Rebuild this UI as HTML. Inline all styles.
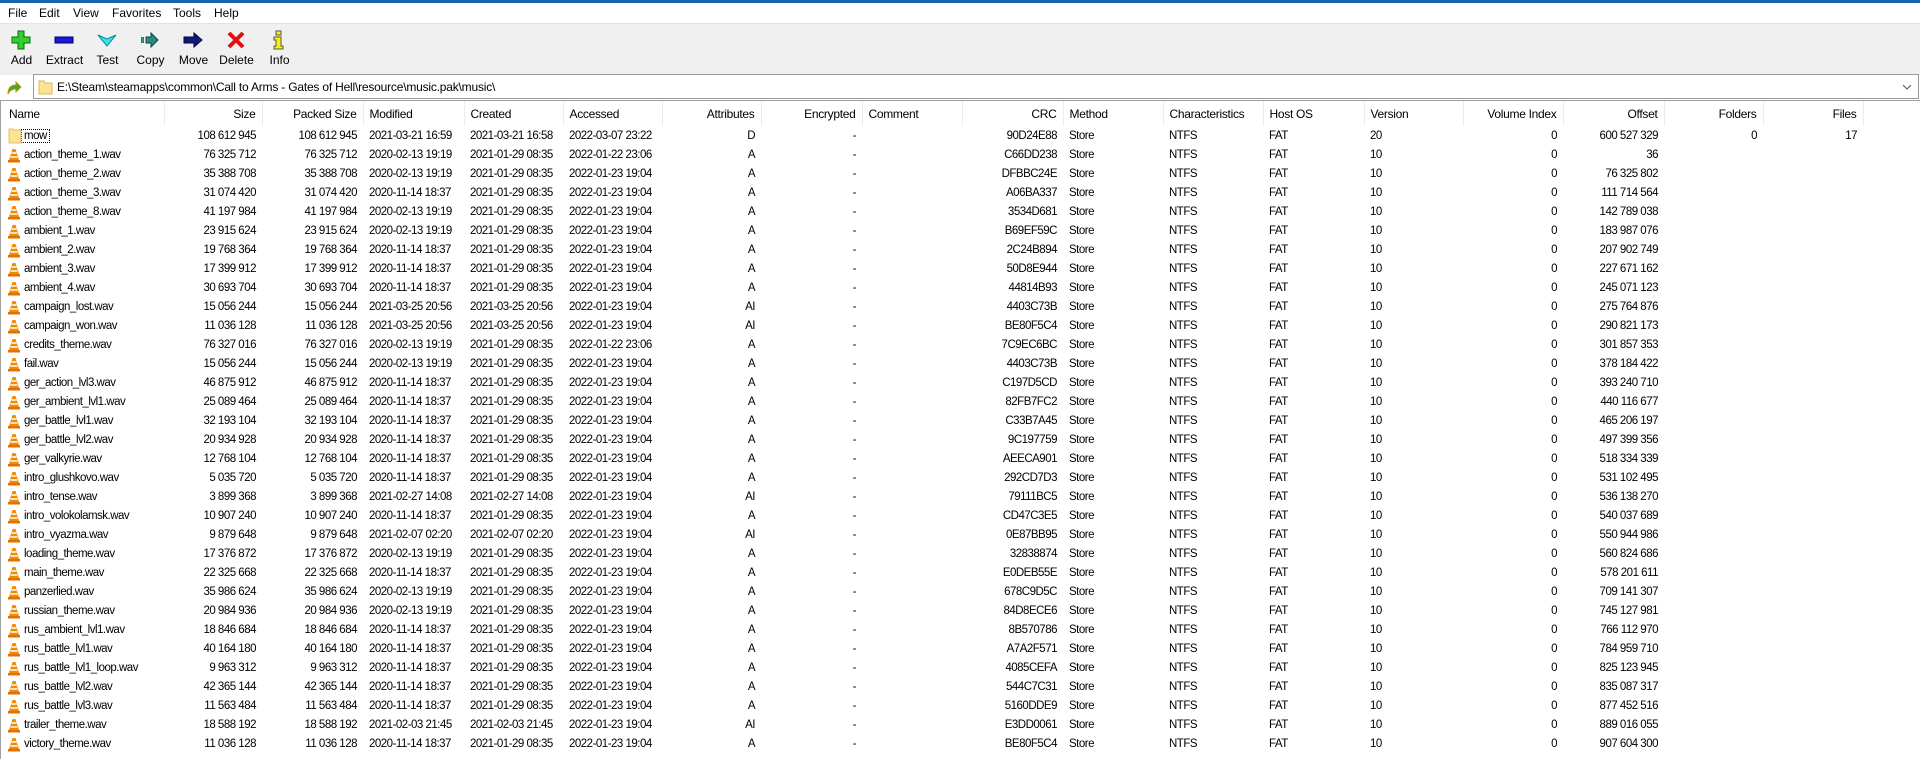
<!DOCTYPE html>
<html><head><meta charset="utf-8"><style>
*{margin:0;padding:0;box-sizing:border-box}
body{width:1920px;height:759px;overflow:hidden;background:#fff;font-family:"Liberation Sans",sans-serif;font-size:12px;color:#000;position:relative}
#top{position:absolute;left:0;top:0;width:1920px;height:3px;background:#1565b0}
#menu{position:absolute;top:3px;left:0;width:1920px;height:20px;background:#fff}
#menu span{position:absolute;top:3px;font-size:12px}
#tb{position:absolute;top:23px;left:0;width:1920px;height:52px;background:#f0f0f0;border-top:1px solid #e3e3e3}
.btn{position:absolute;top:0;width:43px;height:50px;text-align:center}
.btn svg{position:absolute;left:11px;top:6px}
.btn span{position:absolute;left:-10px;right:-10px;top:29px;text-align:center}
#addr{position:absolute;top:74px;left:33px;width:1886px;height:25px;border:1px solid #9a9a9a;background:#fff}
#addr .t{position:absolute;left:23px;top:5px;letter-spacing:-0.2px}
#up{position:absolute;left:5px;top:78px}
#list{position:absolute;top:100px;left:0;width:1920px;height:659px;border-left:1px solid #a0a0a0;border-top:1px solid #a0a0a0}
table{border-collapse:collapse;table-layout:fixed;width:1862px;font-size:11.5px;letter-spacing:-0.5px}
td,th{height:19px;padding:0 6px;white-space:nowrap;overflow:hidden;font-weight:normal;text-align:left}
th{height:25px;border-right:1px solid #ececec;font-size:12px;letter-spacing:-0.3px}
.r{text-align:right}
td:first-child{padding-left:23px;position:relative}
.ic{position:absolute;left:7px;top:2px}
.mw{border:1px dotted #000;padding:0 2px;margin-left:-3px}
</style></head><body>
<div id="top"></div>
<div id="menu"><span style="left:8px">File</span><span style="left:39px">Edit</span><span style="left:73px">View</span><span style="left:112px">Favorites</span><span style="left:173px">Tools</span><span style="left:214px">Help</span></div>
<div id="tb">
<div class="btn" style="left:0"><svg width="20" height="20"><path d="M7 1h6v6h6v6h-6v6H7v-6H1V7h6z" fill="#2ed12e" stroke="#0a6a0a"/></svg><span>Add</span></div>
<div class="btn" style="left:43px"><svg width="20" height="20"><rect x="1" y="7" width="18" height="6" fill="#1a1ad8" stroke="#000070"/></svg><span>Extract</span></div>
<div class="btn" style="left:86px"><svg width="20" height="20"><path d="M1 5l9 4 9-4-9 11z" fill="#3ee0ee" stroke="#0a8a9a"/></svg><span>Test</span></div>
<div class="btn" style="left:129px"><svg width="20" height="20"><rect x="1" y="7" width="3" height="6" fill="#2a8a80"/><path d="M6 7h5V3l7 7-7 7v-4H6z" fill="#2a8a80" stroke="#0b4b45"/></svg><span>Copy</span></div>
<div class="btn" style="left:172px"><svg width="20" height="20"><path d="M1 7h10V3l8 7-8 7v-4H1z" fill="#101a78" stroke="#000040"/></svg><span>Move</span></div>
<div class="btn" style="left:215px"><svg width="20" height="20"><path d="M3 3l14 14M17 3L3 17" stroke="#e01010" stroke-width="4"/></svg><span>Delete</span></div>
<div class="btn" style="left:258px"><svg width="20" height="20"><rect x="7" y="1" width="5" height="4" fill="#f4f400" stroke="#555"/><path d="M5 7h7v9h2v3H5v-3h2v-6H5z" fill="#f4f400" stroke="#555"/></svg><span>Info</span></div>
</div>
<svg id="up" width="18" height="18"><path d="M3 16c0-6 3-9 8-9V4l5 5-5 5v-3c-3 0-6 1-8 5z" fill="#3aa83a" stroke="#c89a00"/></svg>
<div id="addr"><svg style="position:absolute;left:4px;top:4px" width="15" height="16"><path d="M1 2h5l1 2h7v11H1z" fill="#fce391" stroke="#d8b860"/></svg><span class="t">E:\Steam\steamapps\common\Call to Arms - Gates of Hell\resource\music.pak\music\</span><svg style="position:absolute;right:6px;top:9px" width="10" height="6"><path d="M1 1l4 4 4-4" fill="none" stroke="#555"/></svg></div>
<div id="list"><table>
<colgroup><col style="width:163px"><col style="width:98px"><col style="width:101px"><col style="width:101px"><col style="width:99px"><col style="width:99px"><col style="width:99px"><col style="width:101px"><col style="width:100px"><col style="width:101px"><col style="width:100px"><col style="width:100px"><col style="width:101px"><col style="width:99px"><col style="width:100px"><col style="width:101px"><col style="width:99px"><col style="width:100px"></colgroup>
<tr><th style="padding-left:8px">Name</th><th class="r">Size</th><th class="r">Packed Size</th><th>Modified</th><th>Created</th><th>Accessed</th><th class="r">Attributes</th><th class="r">Encrypted</th><th>Comment</th><th class="r">CRC</th><th>Method</th><th>Characteristics</th><th>Host OS</th><th>Version</th><th class="r">Volume Index</th><th class="r">Offset</th><th class="r">Folders</th><th class="r">Files</th></tr>
<tr><td><svg class="ic" width="14" height="16"><path d="M1 1h4l1 1h7v13H1z" fill="#fce391" stroke="#e0c070"/></svg><span class="mw">mow</span></td><td class="r">108 612 945</td><td class="r">108 612 945</td><td>2021-03-21 16:59</td><td>2021-03-21 16:58</td><td>2022-03-07 23:22</td><td class="r">D</td><td class="r">-</td><td></td><td class="r">90D24E88</td><td>Store</td><td>NTFS</td><td>FAT</td><td>20</td><td class="r">0</td><td class="r">600 527 329</td><td class="r">0</td><td class="r">17</td></tr>
<tr><td><svg class="ic" width="12" height="16"><path d="M4.5 2h3l3.5 11H1z" fill="#f08a00"/><path d="M3.5 6h5M2.5 10h7" stroke="#fff" stroke-width="1.6"/><rect x="0" y="13" width="12" height="2.5" fill="#e07000"/></svg>action_theme_1.wav</td><td class="r">76 325 712</td><td class="r">76 325 712</td><td>2020-02-13 19:19</td><td>2021-01-29 08:35</td><td>2022-01-22 23:06</td><td class="r">A</td><td class="r">-</td><td></td><td class="r">C66DD238</td><td>Store</td><td>NTFS</td><td>FAT</td><td>10</td><td class="r">0</td><td class="r">36</td><td></td><td></td></tr>
<tr><td><svg class="ic" width="12" height="16"><path d="M4.5 2h3l3.5 11H1z" fill="#f08a00"/><path d="M3.5 6h5M2.5 10h7" stroke="#fff" stroke-width="1.6"/><rect x="0" y="13" width="12" height="2.5" fill="#e07000"/></svg>action_theme_2.wav</td><td class="r">35 388 708</td><td class="r">35 388 708</td><td>2020-02-13 19:19</td><td>2021-01-29 08:35</td><td>2022-01-23 19:04</td><td class="r">A</td><td class="r">-</td><td></td><td class="r">DFBBC24E</td><td>Store</td><td>NTFS</td><td>FAT</td><td>10</td><td class="r">0</td><td class="r">76 325 802</td><td></td><td></td></tr>
<tr><td><svg class="ic" width="12" height="16"><path d="M4.5 2h3l3.5 11H1z" fill="#f08a00"/><path d="M3.5 6h5M2.5 10h7" stroke="#fff" stroke-width="1.6"/><rect x="0" y="13" width="12" height="2.5" fill="#e07000"/></svg>action_theme_3.wav</td><td class="r">31 074 420</td><td class="r">31 074 420</td><td>2020-11-14 18:37</td><td>2021-01-29 08:35</td><td>2022-01-23 19:04</td><td class="r">A</td><td class="r">-</td><td></td><td class="r">A06BA337</td><td>Store</td><td>NTFS</td><td>FAT</td><td>10</td><td class="r">0</td><td class="r">111 714 564</td><td></td><td></td></tr>
<tr><td><svg class="ic" width="12" height="16"><path d="M4.5 2h3l3.5 11H1z" fill="#f08a00"/><path d="M3.5 6h5M2.5 10h7" stroke="#fff" stroke-width="1.6"/><rect x="0" y="13" width="12" height="2.5" fill="#e07000"/></svg>action_theme_8.wav</td><td class="r">41 197 984</td><td class="r">41 197 984</td><td>2020-02-13 19:19</td><td>2021-01-29 08:35</td><td>2022-01-23 19:04</td><td class="r">A</td><td class="r">-</td><td></td><td class="r">3534D681</td><td>Store</td><td>NTFS</td><td>FAT</td><td>10</td><td class="r">0</td><td class="r">142 789 038</td><td></td><td></td></tr>
<tr><td><svg class="ic" width="12" height="16"><path d="M4.5 2h3l3.5 11H1z" fill="#f08a00"/><path d="M3.5 6h5M2.5 10h7" stroke="#fff" stroke-width="1.6"/><rect x="0" y="13" width="12" height="2.5" fill="#e07000"/></svg>ambient_1.wav</td><td class="r">23 915 624</td><td class="r">23 915 624</td><td>2020-02-13 19:19</td><td>2021-01-29 08:35</td><td>2022-01-23 19:04</td><td class="r">A</td><td class="r">-</td><td></td><td class="r">B69EF59C</td><td>Store</td><td>NTFS</td><td>FAT</td><td>10</td><td class="r">0</td><td class="r">183 987 076</td><td></td><td></td></tr>
<tr><td><svg class="ic" width="12" height="16"><path d="M4.5 2h3l3.5 11H1z" fill="#f08a00"/><path d="M3.5 6h5M2.5 10h7" stroke="#fff" stroke-width="1.6"/><rect x="0" y="13" width="12" height="2.5" fill="#e07000"/></svg>ambient_2.wav</td><td class="r">19 768 364</td><td class="r">19 768 364</td><td>2020-11-14 18:37</td><td>2021-01-29 08:35</td><td>2022-01-23 19:04</td><td class="r">A</td><td class="r">-</td><td></td><td class="r">2C24B894</td><td>Store</td><td>NTFS</td><td>FAT</td><td>10</td><td class="r">0</td><td class="r">207 902 749</td><td></td><td></td></tr>
<tr><td><svg class="ic" width="12" height="16"><path d="M4.5 2h3l3.5 11H1z" fill="#f08a00"/><path d="M3.5 6h5M2.5 10h7" stroke="#fff" stroke-width="1.6"/><rect x="0" y="13" width="12" height="2.5" fill="#e07000"/></svg>ambient_3.wav</td><td class="r">17 399 912</td><td class="r">17 399 912</td><td>2020-11-14 18:37</td><td>2021-01-29 08:35</td><td>2022-01-23 19:04</td><td class="r">A</td><td class="r">-</td><td></td><td class="r">50D8E944</td><td>Store</td><td>NTFS</td><td>FAT</td><td>10</td><td class="r">0</td><td class="r">227 671 162</td><td></td><td></td></tr>
<tr><td><svg class="ic" width="12" height="16"><path d="M4.5 2h3l3.5 11H1z" fill="#f08a00"/><path d="M3.5 6h5M2.5 10h7" stroke="#fff" stroke-width="1.6"/><rect x="0" y="13" width="12" height="2.5" fill="#e07000"/></svg>ambient_4.wav</td><td class="r">30 693 704</td><td class="r">30 693 704</td><td>2020-11-14 18:37</td><td>2021-01-29 08:35</td><td>2022-01-23 19:04</td><td class="r">A</td><td class="r">-</td><td></td><td class="r">44814B93</td><td>Store</td><td>NTFS</td><td>FAT</td><td>10</td><td class="r">0</td><td class="r">245 071 123</td><td></td><td></td></tr>
<tr><td><svg class="ic" width="12" height="16"><path d="M4.5 2h3l3.5 11H1z" fill="#f08a00"/><path d="M3.5 6h5M2.5 10h7" stroke="#fff" stroke-width="1.6"/><rect x="0" y="13" width="12" height="2.5" fill="#e07000"/></svg>campaign_lost.wav</td><td class="r">15 056 244</td><td class="r">15 056 244</td><td>2021-03-25 20:56</td><td>2021-03-25 20:56</td><td>2022-01-23 19:04</td><td class="r">AI</td><td class="r">-</td><td></td><td class="r">4403C73B</td><td>Store</td><td>NTFS</td><td>FAT</td><td>10</td><td class="r">0</td><td class="r">275 764 876</td><td></td><td></td></tr>
<tr><td><svg class="ic" width="12" height="16"><path d="M4.5 2h3l3.5 11H1z" fill="#f08a00"/><path d="M3.5 6h5M2.5 10h7" stroke="#fff" stroke-width="1.6"/><rect x="0" y="13" width="12" height="2.5" fill="#e07000"/></svg>campaign_won.wav</td><td class="r">11 036 128</td><td class="r">11 036 128</td><td>2021-03-25 20:56</td><td>2021-03-25 20:56</td><td>2022-01-23 19:04</td><td class="r">AI</td><td class="r">-</td><td></td><td class="r">BE80F5C4</td><td>Store</td><td>NTFS</td><td>FAT</td><td>10</td><td class="r">0</td><td class="r">290 821 173</td><td></td><td></td></tr>
<tr><td><svg class="ic" width="12" height="16"><path d="M4.5 2h3l3.5 11H1z" fill="#f08a00"/><path d="M3.5 6h5M2.5 10h7" stroke="#fff" stroke-width="1.6"/><rect x="0" y="13" width="12" height="2.5" fill="#e07000"/></svg>credits_theme.wav</td><td class="r">76 327 016</td><td class="r">76 327 016</td><td>2020-02-13 19:19</td><td>2021-01-29 08:35</td><td>2022-01-22 23:06</td><td class="r">A</td><td class="r">-</td><td></td><td class="r">7C9EC6BC</td><td>Store</td><td>NTFS</td><td>FAT</td><td>10</td><td class="r">0</td><td class="r">301 857 353</td><td></td><td></td></tr>
<tr><td><svg class="ic" width="12" height="16"><path d="M4.5 2h3l3.5 11H1z" fill="#f08a00"/><path d="M3.5 6h5M2.5 10h7" stroke="#fff" stroke-width="1.6"/><rect x="0" y="13" width="12" height="2.5" fill="#e07000"/></svg>fail.wav</td><td class="r">15 056 244</td><td class="r">15 056 244</td><td>2020-02-13 19:19</td><td>2021-01-29 08:35</td><td>2022-01-23 19:04</td><td class="r">A</td><td class="r">-</td><td></td><td class="r">4403C73B</td><td>Store</td><td>NTFS</td><td>FAT</td><td>10</td><td class="r">0</td><td class="r">378 184 422</td><td></td><td></td></tr>
<tr><td><svg class="ic" width="12" height="16"><path d="M4.5 2h3l3.5 11H1z" fill="#f08a00"/><path d="M3.5 6h5M2.5 10h7" stroke="#fff" stroke-width="1.6"/><rect x="0" y="13" width="12" height="2.5" fill="#e07000"/></svg>ger_action_lvl3.wav</td><td class="r">46 875 912</td><td class="r">46 875 912</td><td>2020-11-14 18:37</td><td>2021-01-29 08:35</td><td>2022-01-23 19:04</td><td class="r">A</td><td class="r">-</td><td></td><td class="r">C197D5CD</td><td>Store</td><td>NTFS</td><td>FAT</td><td>10</td><td class="r">0</td><td class="r">393 240 710</td><td></td><td></td></tr>
<tr><td><svg class="ic" width="12" height="16"><path d="M4.5 2h3l3.5 11H1z" fill="#f08a00"/><path d="M3.5 6h5M2.5 10h7" stroke="#fff" stroke-width="1.6"/><rect x="0" y="13" width="12" height="2.5" fill="#e07000"/></svg>ger_ambient_lvl1.wav</td><td class="r">25 089 464</td><td class="r">25 089 464</td><td>2020-11-14 18:37</td><td>2021-01-29 08:35</td><td>2022-01-23 19:04</td><td class="r">A</td><td class="r">-</td><td></td><td class="r">82FB7FC2</td><td>Store</td><td>NTFS</td><td>FAT</td><td>10</td><td class="r">0</td><td class="r">440 116 677</td><td></td><td></td></tr>
<tr><td><svg class="ic" width="12" height="16"><path d="M4.5 2h3l3.5 11H1z" fill="#f08a00"/><path d="M3.5 6h5M2.5 10h7" stroke="#fff" stroke-width="1.6"/><rect x="0" y="13" width="12" height="2.5" fill="#e07000"/></svg>ger_battle_lvl1.wav</td><td class="r">32 193 104</td><td class="r">32 193 104</td><td>2020-11-14 18:37</td><td>2021-01-29 08:35</td><td>2022-01-23 19:04</td><td class="r">A</td><td class="r">-</td><td></td><td class="r">C33B7A45</td><td>Store</td><td>NTFS</td><td>FAT</td><td>10</td><td class="r">0</td><td class="r">465 206 197</td><td></td><td></td></tr>
<tr><td><svg class="ic" width="12" height="16"><path d="M4.5 2h3l3.5 11H1z" fill="#f08a00"/><path d="M3.5 6h5M2.5 10h7" stroke="#fff" stroke-width="1.6"/><rect x="0" y="13" width="12" height="2.5" fill="#e07000"/></svg>ger_battle_lvl2.wav</td><td class="r">20 934 928</td><td class="r">20 934 928</td><td>2020-11-14 18:37</td><td>2021-01-29 08:35</td><td>2022-01-23 19:04</td><td class="r">A</td><td class="r">-</td><td></td><td class="r">9C197759</td><td>Store</td><td>NTFS</td><td>FAT</td><td>10</td><td class="r">0</td><td class="r">497 399 356</td><td></td><td></td></tr>
<tr><td><svg class="ic" width="12" height="16"><path d="M4.5 2h3l3.5 11H1z" fill="#f08a00"/><path d="M3.5 6h5M2.5 10h7" stroke="#fff" stroke-width="1.6"/><rect x="0" y="13" width="12" height="2.5" fill="#e07000"/></svg>ger_valkyrie.wav</td><td class="r">12 768 104</td><td class="r">12 768 104</td><td>2020-11-14 18:37</td><td>2021-01-29 08:35</td><td>2022-01-23 19:04</td><td class="r">A</td><td class="r">-</td><td></td><td class="r">AEECA901</td><td>Store</td><td>NTFS</td><td>FAT</td><td>10</td><td class="r">0</td><td class="r">518 334 339</td><td></td><td></td></tr>
<tr><td><svg class="ic" width="12" height="16"><path d="M4.5 2h3l3.5 11H1z" fill="#f08a00"/><path d="M3.5 6h5M2.5 10h7" stroke="#fff" stroke-width="1.6"/><rect x="0" y="13" width="12" height="2.5" fill="#e07000"/></svg>intro_glushkovo.wav</td><td class="r">5 035 720</td><td class="r">5 035 720</td><td>2020-11-14 18:37</td><td>2021-01-29 08:35</td><td>2022-01-23 19:04</td><td class="r">A</td><td class="r">-</td><td></td><td class="r">292CD7D3</td><td>Store</td><td>NTFS</td><td>FAT</td><td>10</td><td class="r">0</td><td class="r">531 102 495</td><td></td><td></td></tr>
<tr><td><svg class="ic" width="12" height="16"><path d="M4.5 2h3l3.5 11H1z" fill="#f08a00"/><path d="M3.5 6h5M2.5 10h7" stroke="#fff" stroke-width="1.6"/><rect x="0" y="13" width="12" height="2.5" fill="#e07000"/></svg>intro_tense.wav</td><td class="r">3 899 368</td><td class="r">3 899 368</td><td>2021-02-27 14:08</td><td>2021-02-27 14:08</td><td>2022-01-23 19:04</td><td class="r">AI</td><td class="r">-</td><td></td><td class="r">79111BC5</td><td>Store</td><td>NTFS</td><td>FAT</td><td>10</td><td class="r">0</td><td class="r">536 138 270</td><td></td><td></td></tr>
<tr><td><svg class="ic" width="12" height="16"><path d="M4.5 2h3l3.5 11H1z" fill="#f08a00"/><path d="M3.5 6h5M2.5 10h7" stroke="#fff" stroke-width="1.6"/><rect x="0" y="13" width="12" height="2.5" fill="#e07000"/></svg>intro_volokolamsk.wav</td><td class="r">10 907 240</td><td class="r">10 907 240</td><td>2020-11-14 18:37</td><td>2021-01-29 08:35</td><td>2022-01-23 19:04</td><td class="r">A</td><td class="r">-</td><td></td><td class="r">CD47C3E5</td><td>Store</td><td>NTFS</td><td>FAT</td><td>10</td><td class="r">0</td><td class="r">540 037 689</td><td></td><td></td></tr>
<tr><td><svg class="ic" width="12" height="16"><path d="M4.5 2h3l3.5 11H1z" fill="#f08a00"/><path d="M3.5 6h5M2.5 10h7" stroke="#fff" stroke-width="1.6"/><rect x="0" y="13" width="12" height="2.5" fill="#e07000"/></svg>intro_vyazma.wav</td><td class="r">9 879 648</td><td class="r">9 879 648</td><td>2021-02-07 02:20</td><td>2021-02-07 02:20</td><td>2022-01-23 19:04</td><td class="r">AI</td><td class="r">-</td><td></td><td class="r">0E87BB95</td><td>Store</td><td>NTFS</td><td>FAT</td><td>10</td><td class="r">0</td><td class="r">550 944 986</td><td></td><td></td></tr>
<tr><td><svg class="ic" width="12" height="16"><path d="M4.5 2h3l3.5 11H1z" fill="#f08a00"/><path d="M3.5 6h5M2.5 10h7" stroke="#fff" stroke-width="1.6"/><rect x="0" y="13" width="12" height="2.5" fill="#e07000"/></svg>loading_theme.wav</td><td class="r">17 376 872</td><td class="r">17 376 872</td><td>2020-02-13 19:19</td><td>2021-01-29 08:35</td><td>2022-01-23 19:04</td><td class="r">A</td><td class="r">-</td><td></td><td class="r">32838874</td><td>Store</td><td>NTFS</td><td>FAT</td><td>10</td><td class="r">0</td><td class="r">560 824 686</td><td></td><td></td></tr>
<tr><td><svg class="ic" width="12" height="16"><path d="M4.5 2h3l3.5 11H1z" fill="#f08a00"/><path d="M3.5 6h5M2.5 10h7" stroke="#fff" stroke-width="1.6"/><rect x="0" y="13" width="12" height="2.5" fill="#e07000"/></svg>main_theme.wav</td><td class="r">22 325 668</td><td class="r">22 325 668</td><td>2020-11-14 18:37</td><td>2021-01-29 08:35</td><td>2022-01-23 19:04</td><td class="r">A</td><td class="r">-</td><td></td><td class="r">E0DEB55E</td><td>Store</td><td>NTFS</td><td>FAT</td><td>10</td><td class="r">0</td><td class="r">578 201 611</td><td></td><td></td></tr>
<tr><td><svg class="ic" width="12" height="16"><path d="M4.5 2h3l3.5 11H1z" fill="#f08a00"/><path d="M3.5 6h5M2.5 10h7" stroke="#fff" stroke-width="1.6"/><rect x="0" y="13" width="12" height="2.5" fill="#e07000"/></svg>panzerlied.wav</td><td class="r">35 986 624</td><td class="r">35 986 624</td><td>2020-02-13 19:19</td><td>2021-01-29 08:35</td><td>2022-01-23 19:04</td><td class="r">A</td><td class="r">-</td><td></td><td class="r">678C9D5C</td><td>Store</td><td>NTFS</td><td>FAT</td><td>10</td><td class="r">0</td><td class="r">709 141 307</td><td></td><td></td></tr>
<tr><td><svg class="ic" width="12" height="16"><path d="M4.5 2h3l3.5 11H1z" fill="#f08a00"/><path d="M3.5 6h5M2.5 10h7" stroke="#fff" stroke-width="1.6"/><rect x="0" y="13" width="12" height="2.5" fill="#e07000"/></svg>russian_theme.wav</td><td class="r">20 984 936</td><td class="r">20 984 936</td><td>2020-02-13 19:19</td><td>2021-01-29 08:35</td><td>2022-01-23 19:04</td><td class="r">A</td><td class="r">-</td><td></td><td class="r">84D8ECE6</td><td>Store</td><td>NTFS</td><td>FAT</td><td>10</td><td class="r">0</td><td class="r">745 127 981</td><td></td><td></td></tr>
<tr><td><svg class="ic" width="12" height="16"><path d="M4.5 2h3l3.5 11H1z" fill="#f08a00"/><path d="M3.5 6h5M2.5 10h7" stroke="#fff" stroke-width="1.6"/><rect x="0" y="13" width="12" height="2.5" fill="#e07000"/></svg>rus_ambient_lvl1.wav</td><td class="r">18 846 684</td><td class="r">18 846 684</td><td>2020-11-14 18:37</td><td>2021-01-29 08:35</td><td>2022-01-23 19:04</td><td class="r">A</td><td class="r">-</td><td></td><td class="r">8B570786</td><td>Store</td><td>NTFS</td><td>FAT</td><td>10</td><td class="r">0</td><td class="r">766 112 970</td><td></td><td></td></tr>
<tr><td><svg class="ic" width="12" height="16"><path d="M4.5 2h3l3.5 11H1z" fill="#f08a00"/><path d="M3.5 6h5M2.5 10h7" stroke="#fff" stroke-width="1.6"/><rect x="0" y="13" width="12" height="2.5" fill="#e07000"/></svg>rus_battle_lvl1.wav</td><td class="r">40 164 180</td><td class="r">40 164 180</td><td>2020-11-14 18:37</td><td>2021-01-29 08:35</td><td>2022-01-23 19:04</td><td class="r">A</td><td class="r">-</td><td></td><td class="r">A7A2F571</td><td>Store</td><td>NTFS</td><td>FAT</td><td>10</td><td class="r">0</td><td class="r">784 959 710</td><td></td><td></td></tr>
<tr><td><svg class="ic" width="12" height="16"><path d="M4.5 2h3l3.5 11H1z" fill="#f08a00"/><path d="M3.5 6h5M2.5 10h7" stroke="#fff" stroke-width="1.6"/><rect x="0" y="13" width="12" height="2.5" fill="#e07000"/></svg>rus_battle_lvl1_loop.wav</td><td class="r">9 963 312</td><td class="r">9 963 312</td><td>2020-11-14 18:37</td><td>2021-01-29 08:35</td><td>2022-01-23 19:04</td><td class="r">A</td><td class="r">-</td><td></td><td class="r">4085CEFA</td><td>Store</td><td>NTFS</td><td>FAT</td><td>10</td><td class="r">0</td><td class="r">825 123 945</td><td></td><td></td></tr>
<tr><td><svg class="ic" width="12" height="16"><path d="M4.5 2h3l3.5 11H1z" fill="#f08a00"/><path d="M3.5 6h5M2.5 10h7" stroke="#fff" stroke-width="1.6"/><rect x="0" y="13" width="12" height="2.5" fill="#e07000"/></svg>rus_battle_lvl2.wav</td><td class="r">42 365 144</td><td class="r">42 365 144</td><td>2020-11-14 18:37</td><td>2021-01-29 08:35</td><td>2022-01-23 19:04</td><td class="r">A</td><td class="r">-</td><td></td><td class="r">544C7C31</td><td>Store</td><td>NTFS</td><td>FAT</td><td>10</td><td class="r">0</td><td class="r">835 087 317</td><td></td><td></td></tr>
<tr><td><svg class="ic" width="12" height="16"><path d="M4.5 2h3l3.5 11H1z" fill="#f08a00"/><path d="M3.5 6h5M2.5 10h7" stroke="#fff" stroke-width="1.6"/><rect x="0" y="13" width="12" height="2.5" fill="#e07000"/></svg>rus_battle_lvl3.wav</td><td class="r">11 563 484</td><td class="r">11 563 484</td><td>2020-11-14 18:37</td><td>2021-01-29 08:35</td><td>2022-01-23 19:04</td><td class="r">A</td><td class="r">-</td><td></td><td class="r">5160DDE9</td><td>Store</td><td>NTFS</td><td>FAT</td><td>10</td><td class="r">0</td><td class="r">877 452 516</td><td></td><td></td></tr>
<tr><td><svg class="ic" width="12" height="16"><path d="M4.5 2h3l3.5 11H1z" fill="#f08a00"/><path d="M3.5 6h5M2.5 10h7" stroke="#fff" stroke-width="1.6"/><rect x="0" y="13" width="12" height="2.5" fill="#e07000"/></svg>trailer_theme.wav</td><td class="r">18 588 192</td><td class="r">18 588 192</td><td>2021-02-03 21:45</td><td>2021-02-03 21:45</td><td>2022-01-23 19:04</td><td class="r">AI</td><td class="r">-</td><td></td><td class="r">E3DD0061</td><td>Store</td><td>NTFS</td><td>FAT</td><td>10</td><td class="r">0</td><td class="r">889 016 055</td><td></td><td></td></tr>
<tr><td><svg class="ic" width="12" height="16"><path d="M4.5 2h3l3.5 11H1z" fill="#f08a00"/><path d="M3.5 6h5M2.5 10h7" stroke="#fff" stroke-width="1.6"/><rect x="0" y="13" width="12" height="2.5" fill="#e07000"/></svg>victory_theme.wav</td><td class="r">11 036 128</td><td class="r">11 036 128</td><td>2020-11-14 18:37</td><td>2021-01-29 08:35</td><td>2022-01-23 19:04</td><td class="r">A</td><td class="r">-</td><td></td><td class="r">BE80F5C4</td><td>Store</td><td>NTFS</td><td>FAT</td><td>10</td><td class="r">0</td><td class="r">907 604 300</td><td></td><td></td></tr>
</table></div>
</body></html>
